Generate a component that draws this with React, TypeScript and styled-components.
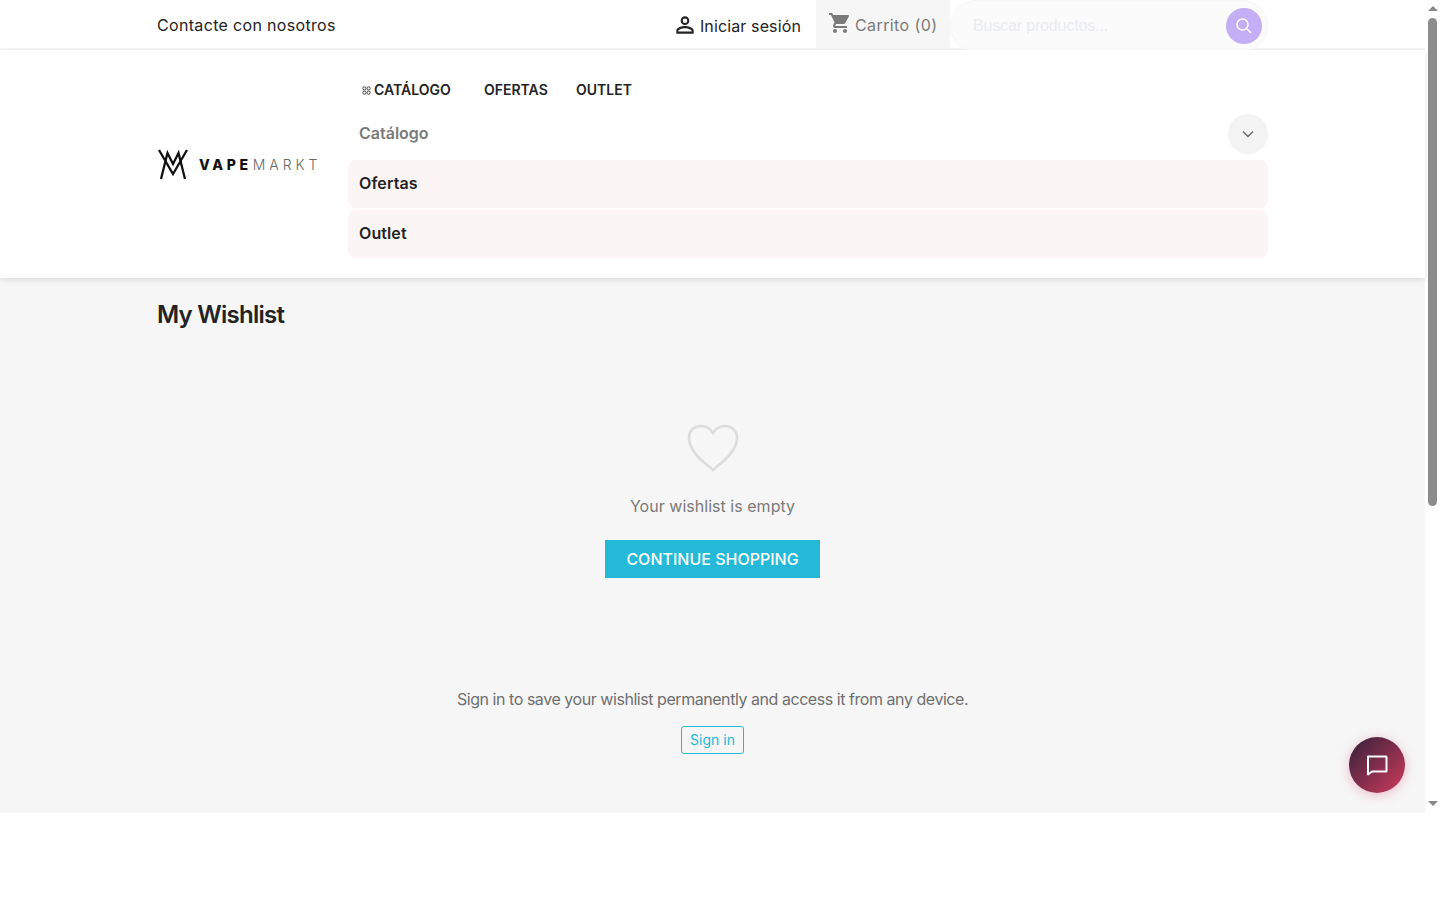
import React from "react";
import styled, { createGlobalStyle } from "styled-components";

const Global = createGlobalStyle`
  html, body { margin: 0; padding: 0; background: #fff; overflow: hidden; }
  body { font-family: Inter, "Noto Sans", sans-serif; color: #232323; }
  * { box-sizing: border-box; }
`;
const Frame = styled.div`display: flex; height: 813px; width: 1440px; position: relative;`;
const Page = styled.div`width: 1425px; display: flex; flex-direction: column; background: #f6f6f6;`;
const TopBar = styled.div`height: 50px; background: #fff; border-bottom: 2px solid #f6f6f6; padding: 0 157px; display: flex; align-items: stretch;`;
const ContactLink = styled.a`font-size: 16px; letter-spacing: .33px; color: #232323; flex: 1; line-height: 50px;`;
const SignIn = styled.a`display: flex; align-items: center; gap: 2px; font-size: 16px; letter-spacing: .13px; color: #232323; padding-right: 15px;`;
const SignInLabel = styled.span`padding-top: 3px;`;
const PersonIcon = styled.svg`margin-top: 2px; flex: none;`;
const Cart = styled.a`width: 134px; background: #f6f6f6; display: flex; align-items: center; gap: 3px; padding-left: 12px; font-size: 16px; letter-spacing: .4px; color: #7a7a7a;`;
const CartIcon = styled.svg`margin-bottom: 2px; flex: none;`;
const CartLabel = styled.span`padding-top: 1px;`;
const Search = styled.div`width: 318px; height: 52px; border: 1px solid #f6f6f6; border-radius: 26px; background: #fbfbfb; display: flex; align-items: center; justify-content: space-between; padding: 0 5px 0 22px; font-family: "Liberation Sans", sans-serif; font-size: 16px; letter-spacing: -.15px; color: #e9ebef;`;
const SearchBtn = styled.span`width: 36px; height: 36px; border-radius: 50%; background: #c4aef5; display: flex; align-items: center; justify-content: center;`;
const Header = styled.header`height: 228px; background: #fff; box-shadow: 0 2px 5px rgba(0,0,0,.11); padding: 0 157px; display: flex; position: relative;`;
const LogoWrap = styled.div`width: 191px; display: flex; align-items: center; gap: 11px; padding-left: 1px;`;
const LogoText = styled.span`font-size: 14px; letter-spacing: 3.7px; white-space: nowrap;`;
const LogoBold = styled.b`font-weight: 800; color: #111;`;
const LogoLight = styled.span`font-weight: 300; color: #666; margin-left: 1px; letter-spacing: 3.9px;`;
const NavCol = styled.div`flex: 1; display: flex; flex-direction: column;`;
const Menu = styled.nav`height: 64px; padding-top: 31px; padding-left: 14px; display: flex; align-items: flex-start; font-size: 14px; font-weight: 600; line-height: 18px;`;
const MenuItem = styled.a<{ $w: number }>`width: ${p => p.$w}px; display: flex; align-items: center; gap: 3px; color: #232323; letter-spacing: 0;`;
const Collapse = styled.div`height: 46px; display: flex; align-items: flex-start; justify-content: space-between; padding-left: 11px; font-size: 16px; line-height: 38px; font-weight: 600; color: #7a7a7a;`;
const Chevron = styled.span`width: 40px; height: 40px; border-radius: 50%; background: #f3f3f3; display: flex; align-items: center; justify-content: center;`;
const Row = styled.a`height: 48px; margin-bottom: 2px; background: #fbf5f5; border-radius: 8px; padding: 0 0 2px 11px; display: flex; align-items: center; font-size: 16px; letter-spacing: .1px; font-weight: 600; color: #232323;`;
const Main = styled.main`flex: 1; padding: 0 157px; display: flex; flex-direction: column;`;
const Title = styled.h1`margin: 21px 0 0; font-size: 24px; line-height: 32px; font-weight: 600; color: #232323; letter-spacing: -.75px;`;
const Empty = styled.section`display: flex; flex-direction: column; align-items: center; margin-top: 93px;`;
const EmptyText = styled.p`margin: 22px 0 0; font-size: 16px; line-height: 24px; color: #7a7a7a; letter-spacing: .03px;`;
const Continue = styled.a`margin-top: 22px; width: 215px; height: 38px; background: #24b9d7; color: #fff; font-size: 16px; font-weight: 500; display: flex; align-items: center; justify-content: center;`;
const Hint = styled.p`margin: 109px 0 0; font-size: 16px; line-height: 24px; color: #6f6f6f; letter-spacing: -.45px;`;
const SignBtn = styled.a`margin-top: 15px; width: 63px; height: 28px; padding-bottom: 2px; border: 1px solid #24b9d7; border-radius: 3px; color: #24b9d7; font-size: 14px; display: flex; align-items: center; justify-content: center;`;
const Chat = styled.button`position: absolute; left: 1349px; top: 737px; width: 56px; height: 56px; border: 0; padding: 0; border-radius: 50%; background: linear-gradient(135deg, #33203a, #cf3b5c); box-shadow: 0 2px 12px rgba(207,59,92,.3); display: flex; align-items: center; justify-content: center;`;
const Scrollbar = styled.div`width: 15px; background: #fff; display: flex; flex-direction: column; align-items: center;`;
const Arrow = styled.span<{ $down?: boolean }>`width: 0; height: 0; margin: ${p => p.$down ? "auto 0 7px" : "6px 0 0"}; border-left: 5px solid transparent; border-right: 5px solid transparent; ${p => p.$down ? "border-top: 5px solid #888;" : "border-bottom: 5px solid #888;"}`;
const Thumb = styled.span`width: 9px; height: 488px; margin-top: 7px; border-radius: 5px; background: #8c8c8c;`;

const LogoMark = () => (
  <svg width="30" height="31" viewBox="0 0 30 31" fill="none" stroke="#111" strokeWidth="2.3">
    <path d="M3 30 L9.5 4 L15 15 L20.5 4 L27 30" />
    <path d="M1 1 L15 25 L29 1" />
  </svg>
);

export default function App() {
  return (
    <Frame>
      <Global />
      <Page>
        <TopBar>
          <ContactLink>Contacte con nosotros</ContactLink>
          <SignIn>
            <PersonIcon width="26" height="26" viewBox="0 0 24 24" fill="#232323"><path d="M12 5.9a2.1 2.1 0 1 1 0 4.2 2.1 2.1 0 0 1 0-4.2m0 9c2.97 0 6.1 1.46 6.1 2.1v1.1H5.9V17c0-.64 3.13-2.1 6.1-2.1M12 4C9.79 4 8 5.79 8 8s1.79 4 4 4 4-1.79 4-4-1.79-4-4-4zm0 9c-2.67 0-8 1.34-8 4v3h16v-3c0-2.66-5.33-4-8-4z"/></PersonIcon>
            <SignInLabel>Iniciar sesión</SignInLabel>
          </SignIn>
          <Cart>
            <CartIcon width="24" height="24" viewBox="0 0 24 24" fill="#7a7a7a"><path d="M7 18c-1.1 0-1.99.9-1.99 2S5.9 22 7 22s2-.9 2-2-.9-2-2-2zM1 2v2h2l3.6 7.59-1.35 2.45c-.16.28-.25.61-.25.96 0 1.1.9 2 2 2h12v-2H7.42c-.14 0-.25-.11-.25-.25l.03-.12.9-1.63h7.45c.75 0 1.41-.41 1.75-1.03l3.58-6.49A1 1 0 0 0 20.01 4H5.21l-.94-2H1zm16 16c-1.1 0-1.99.9-1.99 2s.89 2 1.99 2 2-.9 2-2-.9-2-2-2z"/></CartIcon>
            <CartLabel>Carrito (0)</CartLabel>
          </Cart>
          <Search>
            Buscar productos...
            <SearchBtn>
              <svg width="18" height="18" viewBox="0 0 18 18" fill="none" stroke="#fff" strokeWidth="1.4"><circle cx="7.5" cy="7.5" r="5.5"/><path d="M11.5 11.5 L16 16"/></svg>
            </SearchBtn>
          </Search>
        </TopBar>
        <Header>
          <LogoWrap>
            <LogoMark />
            <LogoText><LogoBold>VAPE</LogoBold><LogoLight>MARKT</LogoLight></LogoText>
          </LogoWrap>
          <NavCol>
            <Menu>
              <MenuItem $w={122}>
                <svg width="9" height="9" viewBox="0 0 9 9" fill="none" stroke="#444" strokeWidth="1"><circle cx="2.4" cy="2.4" r="1.6"/><circle cx="6.6" cy="2.4" r="1.6"/><circle cx="2.4" cy="6.6" r="1.6"/><circle cx="6.6" cy="6.6" r="1.6"/></svg>
                CATÁLOGO
              </MenuItem>
              <MenuItem $w={92}>OFERTAS</MenuItem>
              <MenuItem $w={60}>OUTLET</MenuItem>
            </Menu>
            <Collapse>
              Catálogo
              <Chevron>
                <svg width="12" height="8" viewBox="0 0 12 8" fill="none" stroke="#666" strokeWidth="1.4"><path d="M1 1.5 L6 6.5 L11 1.5"/></svg>
              </Chevron>
            </Collapse>
            <Row>Ofertas</Row>
            <Row>Outlet</Row>
          </NavCol>
        </Header>
        <Main>
          <Title>My Wishlist</Title>
          <Empty>
            <svg width="52" height="48" viewBox="0 0 52 48" fill="none" stroke="#dcdcdc" strokeWidth="2.6"><path d="M26 46 C18 39 2 28 2 14 C2 6 8 2 14 2 C19 2 23 4 26 9 C29 4 33 2 38 2 C44 2 50 6 50 14 C50 28 34 39 26 46 Z"/></svg>
            <EmptyText>Your wishlist is empty</EmptyText>
            <Continue>CONTINUE SHOPPING</Continue>
            <Hint>Sign in to save your wishlist permanently and access it from any device.</Hint>
            <SignBtn>Sign in</SignBtn>
          </Empty>
        </Main>
      </Page>
      <Scrollbar>
        <Arrow />
        <Thumb />
        <Arrow $down />
      </Scrollbar>
      <Chat>
        <svg width="24" height="24" viewBox="0 0 24 24" fill="none" stroke="#fff" strokeWidth="2" strokeLinejoin="round"><path d="M3 3.5h18a.5.5 0 0 1 .5.5v14a.5.5 0 0 1-.5.5H7L3 21.5V4a.5.5 0 0 1 0-.5z"/></svg>
      </Chat>
    </Frame>
  );
}
